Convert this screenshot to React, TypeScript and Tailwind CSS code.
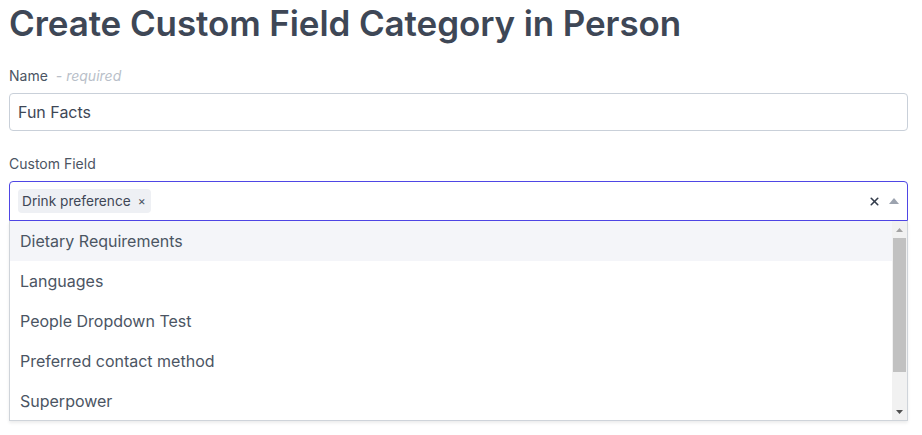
import { X } from "lucide-react";

const options = [
  "Dietary Requirements",
  "Languages",
  "People Dropdown Test",
  "Preferred contact method",
  "Superpower",
];

function Caret({ up, className }: { up?: boolean; className?: string }) {
  return (
    <svg width="10" height="6" viewBox="0 0 10 6" className={className}>
      {up ? <path d="M0 6 L5 0 L10 6 Z" fill="currentColor" /> : <path d="M0 0 L5 6 L10 0 Z" fill="currentColor" />}
    </svg>
  );
}

export default function App() {
  return (
    <div className="min-h-screen bg-white pl-[9px] pr-[14px] pt-[1px] font-['Inter',sans-serif]">
      <h1 className="text-[35px] leading-[44px] font-semibold text-[#3e4756] tracking-[-0.1px]">
        Create Custom Field Category in Person
      </h1>

      <div className="mt-[21px]">
        <label className="block text-[14px] leading-[20px] text-[#4b5563]">
          Name <span className="italic text-[#b9bfc9] ml-1">- required</span>
        </label>
        <div className="mt-[7px] h-[38px] rounded border border-[#c9d0d9] flex items-center px-[8px] text-[16px] text-[#3e4756]">
          Fun Facts
        </div>
      </div>

      <div className="mt-[23px]">
        <label className="block text-[14px] leading-[20px] text-[#4b5563]">Custom Field</label>
        <div className="mt-[7px]">
          <div className="h-[40px] rounded-t border border-[#4f46e5] flex items-center pl-[8px] pr-[8px]">
            <span className="flex items-center gap-[7px] h-[24px] rounded bg-[#eef0f4] pl-[4px] pr-[5px] text-[13.7px] text-[#3e4756]">
              Drink preference
              <span className="text-[12px] text-[#4b5563] leading-none">×</span>
            </span>
            <div className="flex-1" />
            <X size={13} strokeWidth={3} className="text-[#333c4b]" />
            <Caret up className="ml-[8px] text-[#9ca3af]" />
          </div>
          <div className="flex h-[200px] border border-t-0 border-[#cfd4da] shadow-[0_2px_3px_rgba(0,0,0,0.08)]">
            <ul className="flex-1">
              {options.map((o, i) => (
                <li
                  key={o}
                  className={`h-[40px] flex items-center px-[10px] text-[16px] text-[#4b5563] ${i === 0 ? "bg-[#f4f5f9]" : ""}`}
                >
                  {o}
                </li>
              ))}
            </ul>
            <div className="w-[15px] bg-[#f1f1f1] flex flex-col items-center">
              <div className="h-[17px] flex items-center justify-center text-[#a3a3a3]">
                <svg width="7" height="4" viewBox="0 0 7 4"><path d="M0 4 L3.5 0 L7 4 Z" fill="currentColor" /></svg>
              </div>
              <div className="w-[13px] h-[134px] bg-[#c1c1c1]" />
              <div className="flex-1" />
              <div className="h-[17px] flex items-center justify-center text-[#505050]">
                <svg width="7" height="4" viewBox="0 0 7 4"><path d="M0 0 L3.5 4 L7 0 Z" fill="currentColor" /></svg>
              </div>
            </div>
          </div>
        </div>
      </div>
    </div>
  );
}
